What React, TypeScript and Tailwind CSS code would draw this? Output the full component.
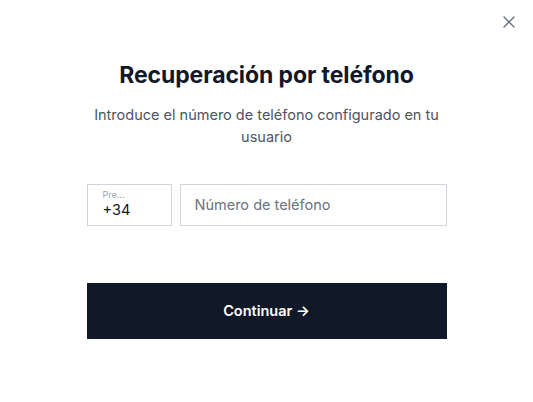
import { X } from "lucide-react";

export default function App() {
  return (
    <div
      className="relative w-[533px] h-[402px] bg-white"
      style={{ fontFamily: "Inter, 'Liberation Sans', sans-serif" }}
    >
      <button className="absolute right-[14px] top-[12px] text-[#6b7280]">
        <X size={20} strokeWidth={1.6} />
      </button>

      <div className="flex flex-col items-center pt-[60px]">
        <h1 className="text-[23px] leading-[30px] font-bold text-[#111827] tracking-[-0.1px]">
          Recuperación por teléfono
        </h1>
        <p className="mt-[14px] w-[360px] text-center text-[14.5px] leading-[22px] text-[#4b5563]">
          Introduce el número de teléfono configurado en tu usuario
        </p>

        <div className="mt-[36px] flex gap-2 w-[360px]">
          <div className="w-[85px] h-[42px] border border-[#d1d5db] px-[15px] flex flex-col justify-center">
            <span className="text-[9px] leading-[10px] text-[#9ca3af]">Pre...</span>
            <span className="text-[14.5px] leading-[20px] text-[#111827]">+34</span>
          </div>
          <div className="flex-1 h-[42px] border border-[#d1d5db] px-[14px] flex items-center">
            <span className="text-[14.5px] text-[#6b7280]">Número de teléfono</span>
          </div>
        </div>

        <button className="mt-[57px] w-[360px] h-[56px] bg-[#111827] text-white text-[14.5px] font-semibold">
          Continuar →
        </button>
      </div>
    </div>
  );
}
